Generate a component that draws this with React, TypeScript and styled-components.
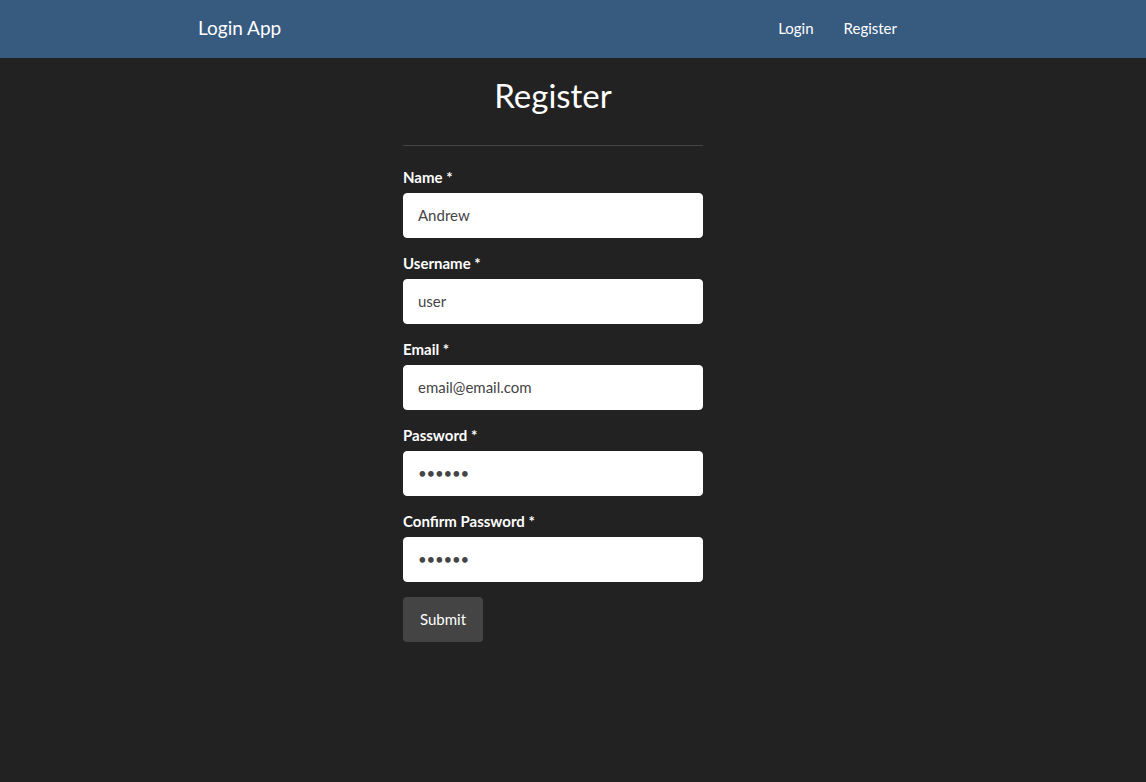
import React from 'react';
import styled, { createGlobalStyle } from 'styled-components';

const GlobalStyle = createGlobalStyle`
  html, body {
    margin: 0;
    padding: 0;
    background: #222222;
    color: #ffffff;
    font-family: Lato, "Open Sans", "Liberation Sans", sans-serif;
    font-size: 15px;
    line-height: 1.5;
  }
  * { box-sizing: border-box; }
`;

const Page = styled.div`
  min-height: 782px;
  background: #222222;
`;

const Navbar = styled.nav`
  height: 58px;
  background: #375a7f;
`;

const NavInner = styled.div`
  width: 750px;
  height: 100%;
  margin: 0 auto;
  padding: 0 36px 2px 0;
  display: flex;
  align-items: center;
  justify-content: space-between;
`;

const Brand = styled.a`
  color: #ffffff;
  font-size: 19px;
  text-decoration: none;
`;

const NavLinks = styled.div`
  display: flex;
`;

const NavLink = styled.a`
  color: #ffffff;
  font-size: 15px;
  padding: 0 15px;
  text-decoration: none;
`;

const Main = styled.main`
  display: flex;
  justify-content: center;
  padding-right: 40px;
`;

const FormColumn = styled.div`
  width: 300px;
`;

const Title = styled.h1`
  margin: 18px -40px 0;
  font-size: 33px;
  font-weight: 400;
  line-height: 1.2;
  text-align: center;
`;

const Divider = styled.hr`
  margin: 29px 0 20px;
  border: 0;
  border-top: 1px solid #444444;
`;

const Group = styled.div`
  margin-bottom: 14px;
`;

const Label = styled.label`
  display: block;
  font-weight: 700;
  margin-bottom: 5px;
  line-height: 22px;
`;

const Input = styled.input<{ $secret?: boolean }>`
  display: block;
  width: 100%;
  height: 45px;
  padding: 0 14px;
  border: 1px solid #ffffff;
  border-radius: 4px;
  background: #ffffff;
  color: #444444;
  font-family: Lato, "Open Sans", "Liberation Sans", sans-serif;
  font-size: 15px;
  letter-spacing: ${({ $secret }) => ($secret ? '-0.2px' : 'normal')};
  outline: none;
`;

const SubmitButton = styled.button`
  margin-top: 1px;
  width: 80px;
  height: 45px;
  border: 0;
  border-radius: 4px;
  background: #444444;
  color: #ffffff;
  font-family: Lato, "Open Sans", "Liberation Sans", sans-serif;
  font-size: 15px;
`;

const fields = [
  { label: 'Name', type: 'text', value: 'Andrew' },
  { label: 'Username', type: 'text', value: 'user' },
  { label: 'Email', type: 'email', value: 'email@email.com' },
  { label: 'Password', type: 'password', value: 'secret' },
  { label: 'Confirm Password', type: 'password', value: 'secret' },
];

export default function App() {
  return (
    <>
      <GlobalStyle />
      <Page>
        <Navbar>
          <NavInner>
            <Brand href="#">Login App</Brand>
            <NavLinks>
              <NavLink href="#">Login</NavLink>
              <NavLink href="#">Register</NavLink>
            </NavLinks>
          </NavInner>
        </Navbar>
        <Main>
          <FormColumn>
            <Title>Register</Title>
            <Divider />
            <form onSubmit={(e) => e.preventDefault()}>
              {fields.map(({ label, type, value }) => (
                <Group key={label}>
                  <Label>{label} *</Label>
                  <Input
                    type={type}
                    defaultValue={value}
                    $secret={type === 'password'}
                  />
                </Group>
              ))}
              <SubmitButton type="submit">Submit</SubmitButton>
            </form>
          </FormColumn>
        </Main>
      </Page>
    </>
  );
}
